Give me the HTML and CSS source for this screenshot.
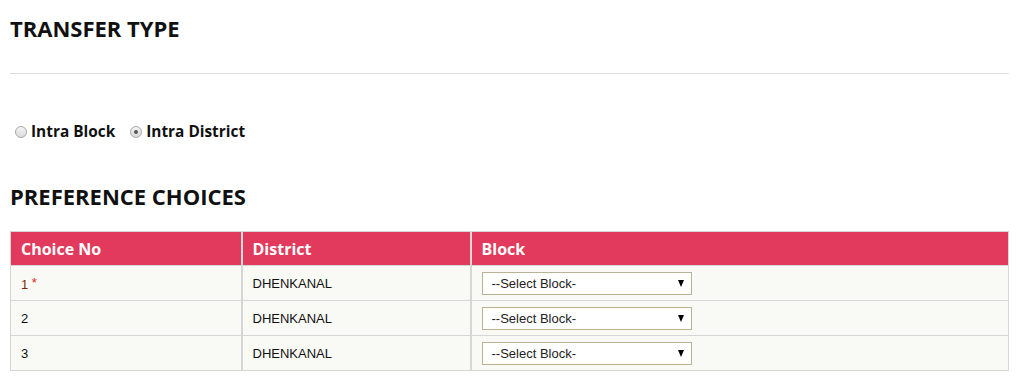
FILE: index.html
```html
<!DOCTYPE html>
<html>
<head>
<meta charset="utf-8">
<link rel="stylesheet" href="styles.css">
</head>
<body>
<div class="page">
  <h2 class="title">TRANSFER TYPE</h2>
  <hr class="rule">
  <div class="radios">
    <label class="radio"><span class="dot"></span>Intra Block</label>
    <label class="radio"><span class="dot checked"></span>Intra District</label>
  </div>
  <h2 class="title title2">PREFERENCE CHOICES</h2>
  <table class="grid">
    <thead>
      <tr><th class="c1">Choice No</th><th class="c2">District</th><th class="c3">Block</th></tr>
    </thead>
    <tbody>
      <tr><td class="req">1 <span class="star">*</span></td><td>DHENKANAL</td><td><div class="sel"><span>--Select Block-</span><span class="arr"></span></div></td></tr>
      <tr><td>2</td><td>DHENKANAL</td><td><div class="sel"><span>--Select Block-</span><span class="arr"></span></div></td></tr>
      <tr><td>3</td><td>DHENKANAL</td><td><div class="sel"><span>--Select Block-</span><span class="arr"></span></div></td></tr>
    </tbody>
  </table>
</div>
</body>
</html>
```
FILE: styles.css
```css
html, body { margin: 0; padding: 0; background: #fff; }
.page { padding: 0 25px 0 10px; width: 999px; }
.title {
  font-family: "Open Sans", "Noto Sans", sans-serif;
  font-weight: 700;
  font-size: 22px;
  color: #111;
  margin: 0;
  padding-top: 15px;
  line-height: 26px;
}
.rule { border: 0; border-top: 1px solid #ddd; margin: 32px 0 0 0; height: 0; }
.radios { display: flex; gap: 15px; margin-top: 48px; align-items: center; }
.radio {
  display: flex; align-items: center;
  font-family: "Open Sans", "Noto Sans", sans-serif;
  font-weight: 700; font-size: 15.4px; line-height: 20px; color: #111;
  padding-left: 5px;
}
.radio + .radio { padding-left: 0; }
.dot {
  width: 10px; height: 10px; border-radius: 50%;
  border: 1px solid #a8a8a8;
  background: linear-gradient(#f4f4f4, #dcdcdc);
  margin-right: 4px; box-sizing: content-box;
  position: relative;
}
.dot.checked::after {
  content: ""; position: absolute; left: 3px; top: 3px;
  width: 4px; height: 4px; border-radius: 50%; background: #555;
}
.title2 { padding-top: 41px; }
.grid {
  margin-top: 22px;
  width: 999px;
  border-collapse: collapse;
  border: 1px solid #d6d6d6;
}
.grid th {
  background: #e23a5c; color: #fff; text-align: left;
  font-family: "Open Sans", "Noto Sans", sans-serif; font-weight: 700; font-size: 16px;
  height: 34px; padding: 0 10px; box-sizing: border-box;
  border-left: 2px solid #e0d8da;
}
.grid th.c1 { width: 231px; border-left: 0; }
.grid th.c2 { width: 229px; }
.grid td {
  background: #f9faf6;
  font-family: "Liberation Sans", Arial, sans-serif; font-size: 13px; color: #111;
  height: 35px; padding: 0 10px; box-sizing: border-box;
  border-top: 1px solid #d6d6d6;
  border-left: 2px solid #d6d6d6;
}
.grid td:first-child { border-left: 0; }
.grid td.req { color: #7a2a10; }
.star { color: #e8201a; vertical-align: 2px; }
.sel {
  width: 210px; height: 23px; box-sizing: border-box;
  border: 1px solid #b9b394; background: #fff;
  display: flex; align-items: center; justify-content: space-between;
  padding: 0 7px 0 9px;
  font-family: "Liberation Sans", Arial, sans-serif; font-size: 13px; color: #222;
}
.arr {
  width: 0; height: 0;
  border-left: 3.5px solid transparent; border-right: 3.5px solid transparent;
  border-top: 7px solid #000;
}
```
